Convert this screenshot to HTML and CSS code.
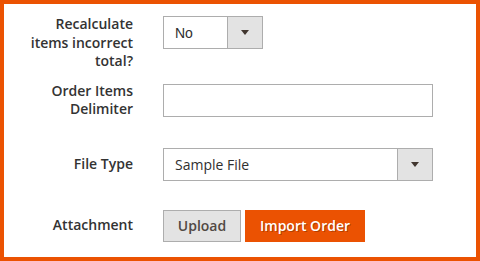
FILE: index.html
```html
<!DOCTYPE html>
<html lang="en">
<head>
    <meta charset="utf-8">
    <title>Import Order</title>
    <link rel="stylesheet" href="styles.css">
</head>
<body>
    <div class="frame">
        <form class="importForm">
            <div class="row rowTop">
                <label class="fieldLabel">Recalculate items incorrect total?</label>
                <div class="select selectSmall">
                    <span class="selectValue selectNative">No</span>
                    <span class="selectArrow"></span>
                </div>
            </div>

            <div class="row rowDelimiter">
                <label class="fieldLabel">Order Items Delimiter</label>
                <input class="textInput" type="text">
            </div>

            <div class="row rowFile">
                <label class="fieldLabel">File Type</label>
                <div class="select selectWide">
                    <span class="selectValue">Sample File</span>
                    <span class="selectArrow"></span>
                </div>
            </div>

            <div class="row rowAttach">
                <label class="fieldLabel">Attachment</label>
                <div class="buttons">
                    <button type="button" class="btn btnUpload">Upload</button>
                    <button type="button" class="btn btnImport">Import Order</button>
                </div>
            </div>
        </form>
    </div>
</body>
</html>
```

FILE: styles.css
```css
        body {
            margin: 0;
            background: #ffffff;
        }

        .frame {
            box-sizing: border-box;
            width: 480px;
            height: 261px;
            border: 4px solid #eb5202;
            background: #ffffff;
        }

        .importForm {
            padding: 11px 0 0 19px;
        }

        .row {
            display: flex;
            align-items: center;
        }

        .rowTop {
            align-items: flex-start;
            margin-bottom: 11px;
        }

        .rowDelimiter {
            margin-bottom: 29px;
        }

        .rowFile {
            margin-bottom: 29px;
        }

        .fieldLabel {
            width: 110px;
            margin-right: 30px;
            text-align: right;
            font-family: 'Open Sans', sans-serif;
            font-weight: 600;
            font-size: 14px;
            line-height: 18.5px;
            color: #333333;
        }

        .select {
            box-sizing: border-box;
            display: flex;
            height: 33px;
            border: 1px solid #adadad;
            background: #ffffff;
        }

        .rowTop .select {
            margin-top: 1px;
        }

        .selectSmall {
            width: 100px;
        }

        .selectWide {
            width: 270px;
        }

        .selectValue {
            flex: 1;
            display: flex;
            align-items: center;
            padding-left: 11px;
            font-family: 'Open Sans', sans-serif;
            font-size: 14px;
            color: #303030;
        }

        .selectNative {
            font-family: 'Liberation Sans', Arial, sans-serif;
        }

        .selectArrow {
            width: 34px;
            display: flex;
            align-items: center;
            justify-content: center;
            border-left: 1px solid #adadad;
            background: #e3e3e3;
        }

        .selectArrow::after {
            content: "";
            border-style: solid;
            border-width: 5px 4px 0 4px;
            border-color: #41362f transparent transparent transparent;
        }

        .textInput {
            box-sizing: border-box;
            width: 270px;
            height: 33px;
            margin: 0;
            border: 1px solid #adadad;
            padding: 0 10px;
            font-family: 'Open Sans', sans-serif;
            font-size: 14px;
        }

        .buttons {
            display: flex;
            gap: 4px;
        }

        .btn {
            box-sizing: border-box;
            height: 32px;
            margin: 0;
            font-family: 'Open Sans', sans-serif;
            font-size: 14px;
            font-weight: 600;
        }

        .btnUpload {
            width: 78px;
            border: 1px solid #adadad;
            background: #e3e3e3;
            color: #514943;
            padding: 0;
        }

        .btnImport {
            width: 120px;
            border: 1px solid #eb5202;
            background: #eb5202;
            color: #ffffff;
            padding: 0;
            text-shadow: 1px 1px 0 rgba(0, 0, 0, 0.25);
        }
```
